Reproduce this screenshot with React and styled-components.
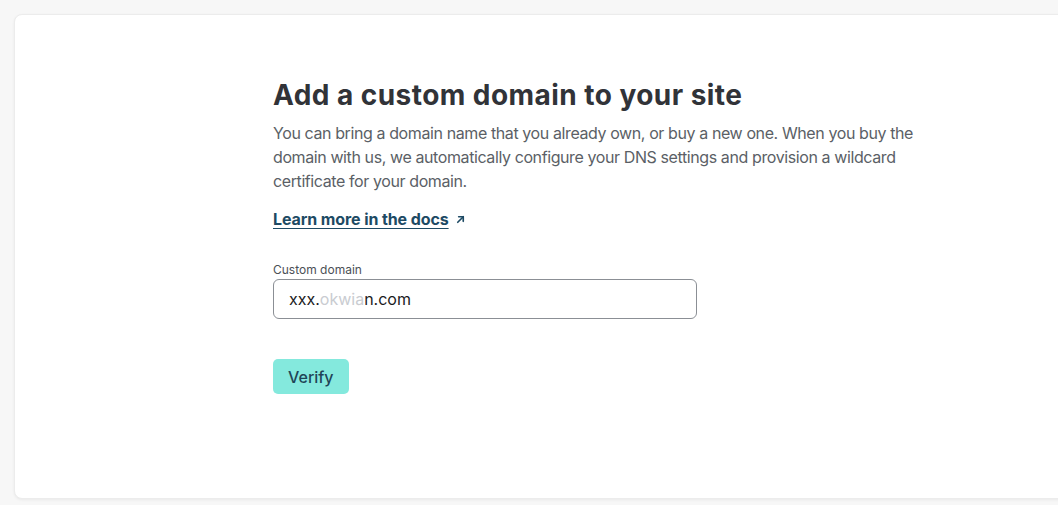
import React from 'react'
import styled, { createGlobalStyle } from 'styled-components'

const GlobalStyle = createGlobalStyle`
  html, body {
    margin: 0;
    padding: 0;
    background: #f7f7f7;
    overflow: hidden;
  }
  body {
    font-family: Inter, "Liberation Sans", sans-serif;
    -webkit-font-smoothing: antialiased;
  }
`

const Page = styled.div`
  padding: 14px 0 0 14px;
  height: 505px;
  box-sizing: border-box;
`

const Card = styled.section`
  width: calc(100% + 40px);
  height: 485px;
  box-sizing: border-box;
  background: #fff;
  border: 1px solid #ececec;
  border-radius: 8px;
  box-shadow: 0 1px 3px rgba(0, 0, 0, 0.06);
  padding: 63px 0 0 258px;
  display: flex;
  flex-direction: column;
  align-items: flex-start;
`

const Title = styled.h1`
  margin: 0;
  font-size: 28px;
  line-height: 34px;
  font-weight: 700;
  color: #313338;
  letter-spacing: 0.45px;
`

const Lead = styled.p`
  margin: 9px 0 0;
  font-size: 16px;
  line-height: 24px;
  color: #5b5f66;
  letter-spacing: -0.4px;
  white-space: nowrap;
`

const DocsLink = styled.a`
  margin-top: 14px;
  display: inline-flex;
  align-items: center;
  gap: 6px;
  font-size: 16px;
  line-height: 24px;
  font-weight: 700;
  color: #1d4a64;
  text-decoration: none;
  letter-spacing: -0.1px;

  span {
    text-decoration: underline;
    text-underline-offset: 3px;
    text-decoration-thickness: 1px;
  }
`

const Field = styled.label`
  margin-top: 31px;
  display: flex;
  flex-direction: column;
  gap: 1px;
`

const FieldLabel = styled.span`
  font-size: 12px;
  line-height: 16px;
  color: #4b4f56;
`

const InputBox = styled.div`
  width: 424px;
  height: 40px;
  box-sizing: border-box;
  border: 1px solid #8b8f95;
  border-radius: 6px;
  padding: 0 15px;
  display: flex;
  align-items: center;
  font-size: 16px;
  color: #1b1b1d;
`

const Redacted = styled.span`
  color: ${p => p.$faint ? '#c9ccd1' : 'inherit'};
`

const Button = styled.button`
  margin-top: 40px;
  height: 35px;
  padding: 0 15px;
  border: none;
  border-radius: 5px;
  background: #84e9dd;
  color: #1f4557;
  font-family: inherit;
  font-size: 16px;
  font-weight: 500;
  cursor: pointer;
`

const Arrow = () => (
  <svg width="11" height="11" viewBox="0 0 12 12" fill="none" stroke="currentColor" strokeWidth="1.8" strokeLinecap="round" strokeLinejoin="round">
    <path d="M3 9 L9 3" />
    <path d="M4 3 H9 V8" />
  </svg>
)

export default function App() {
  return (
    <>
      <GlobalStyle />
      <Page>
        <Card>
          <Title>Add a custom domain to your site</Title>
          <Lead>
            You can bring a domain name that you already own, or buy a new one. When you buy the<br />
            domain with us, we automatically configure your DNS settings and provision a wildcard<br />
            certificate for your domain.
          </Lead>
          <DocsLink href="#">
            <span>Learn more in the docs</span>
            <Arrow />
          </DocsLink>
          <Field>
            <FieldLabel>Custom domain</FieldLabel>
            <InputBox>
              xxx.<Redacted $faint>okwia</Redacted><Redacted>n.com</Redacted>
            </InputBox>
          </Field>
          <Button>Verify</Button>
        </Card>
      </Page>
    </>
  )
}
